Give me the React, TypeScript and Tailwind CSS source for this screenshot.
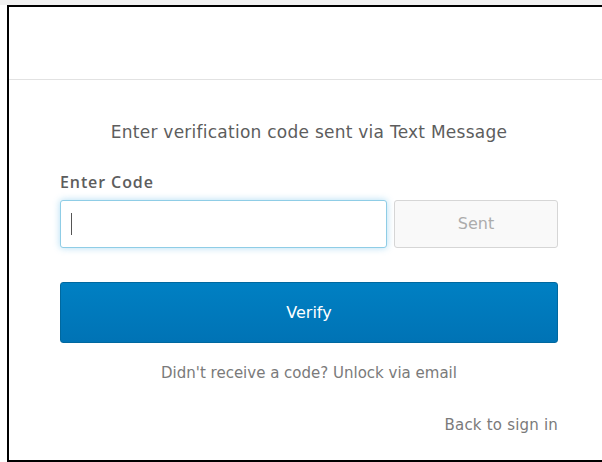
export default function App() {
  return (
    <div
      className="relative w-[602px] h-[462px] overflow-hidden bg-white"
      style={{ fontFamily: '"DejaVu Sans", "Open Sans", sans-serif' }}
    >
      <div className="h-[5px] bg-[#f1f1f1]" />
      <div className="ml-[7px] h-[457px] border-l-2 border-t-2 border-b-2 border-black flex flex-col">
        {/* header strip */}
        <div className="h-[73px] border-b border-[#e2e2e2] shrink-0" />

        {/* verification form */}
        <div className="pl-[51px] w-[549px] flex flex-col">
          <h2 className="mt-[42px] h-[20px] leading-[20px] text-center text-[17px] tracking-[0.25px] text-[#5d5d5d]">
            Enter verification code sent via Text Message
          </h2>

          <label
            className="mt-[30px] h-[20px] leading-[20px] text-[16px] font-semibold tracking-[0.9px] text-[#5d5d5d]"
            style={{ fontFamily: '"Open Sans", sans-serif' }}
          >
            Enter Code
          </label>

          <div className="mt-[8px] flex gap-[7px]">
            <div className="w-[327px] h-[48px] rounded-[3px] border border-[#8fcde6] bg-white shadow-[0_0_7px_rgba(81,180,230,0.45)] flex items-center pl-[10px]">
              <div className="w-px h-[22px] bg-[#555]" />
            </div>
            <button className="w-[164px] h-[48px] rounded-[3px] border border-[#d6d6d6] bg-[#f9f9f9] text-[16px] text-[#acacac]">
              Sent
            </button>
          </div>

          <button className="mt-[34px] w-[498px] h-[61px] rounded-[3px] border border-[#00689f] bg-gradient-to-b from-[#0080c3] to-[#0073b5] text-[16px] text-white">
            Verify
          </button>

          <p className="mt-[20px] h-[20px] leading-[20px] text-center text-[15px] text-[#7a7a7a]">
            Didn't receive a code? Unlock via email
          </p>

          <p className="mt-[32px] h-[20px] leading-[20px] text-right text-[15px] tracking-[0.2px] text-[#7a7a7a]">
            Back to sign in
          </p>
        </div>
      </div>
    </div>
  );
}
